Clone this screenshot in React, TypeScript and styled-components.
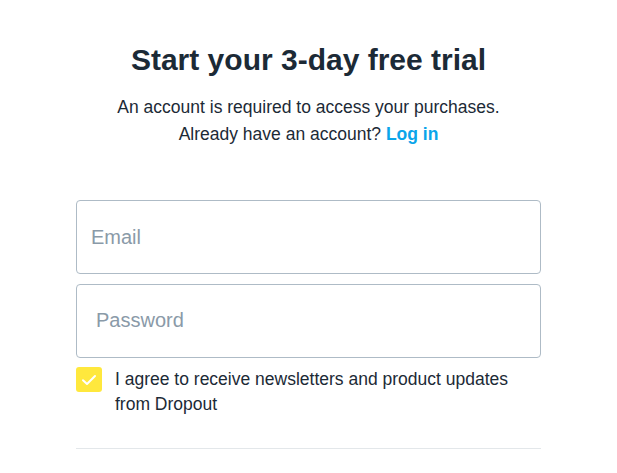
import React from "react";
import styled, { createGlobalStyle } from "styled-components";

const Global = createGlobalStyle`
  html, body { margin: 0; padding: 0; background: #ffffff; }
  body { font-family: "Liberation Sans", Arial, sans-serif; color: #1c2a36; }
  * { box-sizing: border-box; }
`;

const Page = styled.div`
  width: 465px;
  margin: 0 auto;
  padding-top: 40px;
  display: flex;
  flex-direction: column;
`;

const Title = styled.h1`
  margin: 0;
  font-size: 30px;
  line-height: 40px;
  font-weight: 700;
  text-align: center;
  color: #1c2a36;
`;

const Sub = styled.p`
  margin: 14px 0 0;
  font-size: 17.5px;
  line-height: 27px;
  text-align: center;
  color: #1c2a36;
`;

const Link = styled.a`
  color: #0aa5ea;
  font-weight: 700;
  text-decoration: none;
`;

const Form = styled.form`
  margin-top: 52px;
  display: flex;
  flex-direction: column;
  gap: 9.5px;
`;

const Input = styled.input<{ $pad: number }>`
  width: 100%;
  height: 74px;
  border: 1px solid #aebbc6;
  border-radius: 4px;
  padding: 0 0 0 ${(p) => p.$pad}px;
  font-family: "Liberation Sans", Arial, sans-serif;
  font-size: 20px;
  color: #1c2a36;
  background: #fff;
  outline: none;
  &::placeholder { color: #8a9aa8; }
`;

const CheckRow = styled.label`
  display: flex;
  align-items: flex-start;
  gap: 13px;
`;

const Box = styled.span`
  flex: none;
  width: 26px;
  height: 25px;
  border-radius: 3px;
  background: #ffe83d;
  display: flex;
  align-items: center;
  justify-content: center;
`;

const CheckText = styled.span`
  font-size: 17.5px;
  line-height: 25px;
  color: #1c2a36;
`;

const Divider = styled.hr`
  border: 0;
  border-top: 1px solid #e3e7ea;
  margin: 31px 0 0;
`;

export default function App() {
  return (
    <>
      <Global />
      <Page>
        <Title>Start your 3-day free trial</Title>
        <Sub>
          An account is required to access your purchases.
          <br />
          Already have an account? <Link href="#">Log in</Link>
        </Sub>
        <Form onSubmit={(e) => e.preventDefault()}>
          <Input $pad={14} type="email" placeholder="Email" />
          <Input $pad={19} type="password" placeholder="Password" />
          <CheckRow>
            <Box>
              <svg width="16" height="12" viewBox="0 0 16 12" fill="none">
                <path d="M2 6.2 L6 10 L14 2" stroke="#ffffff" strokeWidth="2" strokeLinecap="round" strokeLinejoin="round" />
              </svg>
            </Box>
            <CheckText>I agree to receive newsletters and product updates from Dropout</CheckText>
          </CheckRow>
        </Form>
        <Divider />
      </Page>
    </>
  );
}
